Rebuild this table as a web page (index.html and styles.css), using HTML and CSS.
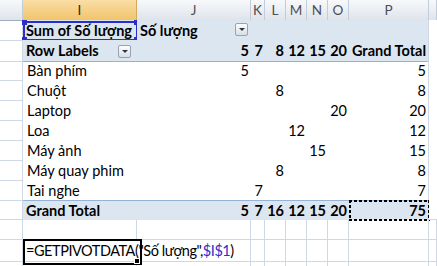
FILE: index.html
```html
<!DOCTYPE html>
<html>
<head>
<meta charset="utf-8">
<link rel="stylesheet" href="styles.css">
</head>
<body>
<div class="sheet">
  <div class="row hdr">
    <div class="ch"></div><div class="ch sel">I</div><div class="ch">J</div><div class="ch">K</div><div class="ch">L</div><div class="ch">M</div><div class="ch">N</div><div class="ch">O</div><div class="ch">P</div><div class="ch"></div>
  </div>

  <div class="row pv shade">
    <div class="c gl"></div>
    <div class="c b">Sum of Số lượng<span class="refbox"><i class="h tl"></i><i class="h tr"></i><i class="h bl"></i><i class="h br"></i></span></div>
    <div class="c b fx">Số lượng<span class="dd dd-j"></span></div>
    <div class="c"></div><div class="c"></div><div class="c"></div><div class="c"></div><div class="c"></div>
    <div class="c pr"></div>
    <div class="c gq"></div>
  </div>

  <div class="row pv shade line-b">
    <div class="c gl"></div>
    <div class="c b fx">Row Labels<span class="dd dd-i"></span></div>
    <div class="c b n">5</div><div class="c b n">7</div><div class="c b n">8</div><div class="c b n">12</div><div class="c b n">15</div><div class="c b n">20</div>
    <div class="c b n pr">Grand Total</div>
    <div class="c gq"></div>
  </div>

  <div class="row pv">
    <div class="c gl"></div><div class="c lbl">Bàn phím</div>
    <div class="c n">5</div><div class="c n"></div><div class="c n"></div><div class="c n"></div><div class="c n"></div><div class="c n"></div>
    <div class="c n pr">5</div><div class="c gq"></div>
  </div>
  <div class="row pv">
    <div class="c gl"></div><div class="c lbl">Chuột</div>
    <div class="c n"></div><div class="c n"></div><div class="c n">8</div><div class="c n"></div><div class="c n"></div><div class="c n"></div>
    <div class="c n pr">8</div><div class="c gq"></div>
  </div>
  <div class="row pv">
    <div class="c gl"></div><div class="c lbl">Laptop</div>
    <div class="c n"></div><div class="c n"></div><div class="c n"></div><div class="c n"></div><div class="c n"></div><div class="c n">20</div>
    <div class="c n pr">20</div><div class="c gq"></div>
  </div>
  <div class="row pv">
    <div class="c gl"></div><div class="c lbl">Loa</div>
    <div class="c n"></div><div class="c n"></div><div class="c n"></div><div class="c n">12</div><div class="c n"></div><div class="c n"></div>
    <div class="c n pr">12</div><div class="c gq"></div>
  </div>
  <div class="row pv">
    <div class="c gl"></div><div class="c lbl">Máy ảnh</div>
    <div class="c n"></div><div class="c n"></div><div class="c n"></div><div class="c n"></div><div class="c n">15</div><div class="c n"></div>
    <div class="c n pr">15</div><div class="c gq"></div>
  </div>
  <div class="row pv">
    <div class="c gl"></div><div class="c lbl">Máy quay phim</div>
    <div class="c n"></div><div class="c n"></div><div class="c n">8</div><div class="c n"></div><div class="c n"></div><div class="c n"></div>
    <div class="c n pr">8</div><div class="c gq"></div>
  </div>
  <div class="row pv">
    <div class="c gl"></div><div class="c lbl">Tai nghe</div>
    <div class="c n"></div><div class="c n">7</div><div class="c n"></div><div class="c n"></div><div class="c n"></div><div class="c n"></div>
    <div class="c n pr">7</div><div class="c gq"></div>
  </div>

  <div class="row pv shade line-t">
    <div class="c gl"></div><div class="c b">Grand Total</div>
    <div class="c b n">5</div><div class="c b n">7</div><div class="c b n">16</div><div class="c b n">12</div><div class="c b n">15</div><div class="c b n">20</div>
    <div class="c b n pr">75<span class="ants"></span></div><div class="c gq"></div>
  </div>

  <div class="row grid">
    <div class="c"></div><div class="c"></div><div class="c"></div><div class="c"></div><div class="c"></div><div class="c"></div><div class="c"></div><div class="c"></div><div class="c"></div><div class="c"></div>
  </div>
  <div class="row grid">
    <div class="c"></div>
    <div class="c edit">=GETPIVOTDATA("Số lượng",<span class="ref">$I$1</span>)<span class="fill"></span></div>
    <div class="c"></div><div class="c"></div><div class="c"></div><div class="c"></div><div class="c"></div><div class="c"></div><div class="c"></div><div class="c"></div>
  </div>
  <div class="row grid">
    <div class="c"></div><div class="c"></div><div class="c"></div><div class="c"></div><div class="c"></div><div class="c"></div><div class="c"></div><div class="c"></div><div class="c"></div><div class="c"></div>
  </div>
</div>
</body>
</html>
```

FILE: styles.css
```css
* { box-sizing: border-box; margin: 0; padding: 0; }
body {
  width: 437px;
  height: 266px;
  overflow: hidden;
  background: #fff;
  font-family: Lato, "Liberation Sans", sans-serif;
  font-size: 14.5px;
  color: #000;
}
.sheet { width: 437px; height: 266px; overflow: hidden; }
.row {
  display: grid;
  grid-template-columns: 23px 114px 114px 14px 21px 21px 21px 21px 80px 8px;
  height: 20px;
}

/* column headers */
.ch {
  background: linear-gradient(#f7f9fb, #dfe4eb);
  border-right: 1px solid #c3cdd9;
  border-bottom: 1px solid #9eacbe;
  color: #4a4f57;
  text-align: center;
  font-size: 13.5px;
  line-height: 20px;
}
.ch.sel {
  background: linear-gradient(#f9dea6, #f2c46a);
  border-right-color: #d3a95a;
  border-bottom-color: #c89a4c;
  color: #3a2d10;
}

/* cells */
.c {
  position: relative;
  white-space: nowrap;
  line-height: 21px;
  padding: 0 2px 0 3px;
}
.b { font-weight: bold; }
.n { text-align: right; padding: 0 2px 0 0; }
.lbl { padding-left: 4px; }
.fx { display: flex; justify-content: space-between; align-items: center; }

.gl { border-right: 1px solid #d0d7e5; border-bottom: 1px solid #d0d7e5; }
.gq { border-bottom: 1px solid #d0d7e5; background: #fff; }
.pr { border-right: 1px solid #d0d7e5; }

.shade .c:not(.gl):not(.gq) { background: #dce6f1; }
.line-b .c:not(.gl):not(.gq) { border-bottom: 1px solid #95b3d7; }
.line-t .c:not(.gl):not(.gq) { border-top: 1px solid #95b3d7; line-height: 19px; }

.grid .c { border-right: 1px solid #d0d7e5; border-bottom: 1px solid #d0d7e5; }

/* dropdown buttons */
.dd {
  width: 13px;
  height: 13px;
  border: 1px solid #98a2b0;
  border-radius: 2px;
  background: linear-gradient(#fdfdfe, #d9dee5);
  position: relative;
  flex: none;
}
.dd::after {
  content: "";
  position: absolute;
  left: 3px;
  top: 4px;
  border-left: 3px solid transparent;
  border-right: 3px solid transparent;
  border-top: 3px solid #2f3642;
}
.dd-i { margin-right: 4px; margin-top: 2px; }
.dd-j { margin-right: 1px; margin-top: -3px; }

/* reference highlight around I1 */
.refbox {
  position: absolute;
  left: 0;
  top: 1px;
  width: 115px;
  height: 20px;
  border: 2px solid #2b2fc8;
}
.h {
  position: absolute;
  width: 5px;
  height: 5px;
  background: #2b2fc8;
}
.tl { left: -3px; top: -3px; }
.tr { right: -3px; top: -3px; }
.bl { left: -3px; bottom: -3px; }
.br { right: -3px; bottom: -3px; }

/* marching ants on grand total */
.ants {
  position: absolute;
  left: 0;
  top: -1px;
  width: 81px;
  height: 21px;
  background:
    repeating-linear-gradient(90deg, #000 0 3px, transparent 3px 5px) top / 100% 2px no-repeat,
    repeating-linear-gradient(90deg, #000 0 3px, transparent 3px 5px) bottom / 100% 2px no-repeat,
    repeating-linear-gradient(180deg, #000 0 3px, transparent 3px 5px) left / 2px 100% no-repeat,
    repeating-linear-gradient(180deg, #000 0 3px, transparent 3px 5px) right / 2px 100% no-repeat;
}

/* edited formula cell */
.edit { z-index: 2; letter-spacing: -0.45px; border-right-color: transparent !important; }
.edit::before {
  content: "";
  position: absolute;
  left: 0;
  top: -1px;
  width: 115px;
  height: 22px;
  border: 2px solid #000;
}
.ref { color: #2b2fc8; }
.fill {
  position: absolute;
  left: 111px;
  top: 18px;
  width: 6px;
  height: 6px;
  background: #000;
  border: 1px solid #fff;
}
```
